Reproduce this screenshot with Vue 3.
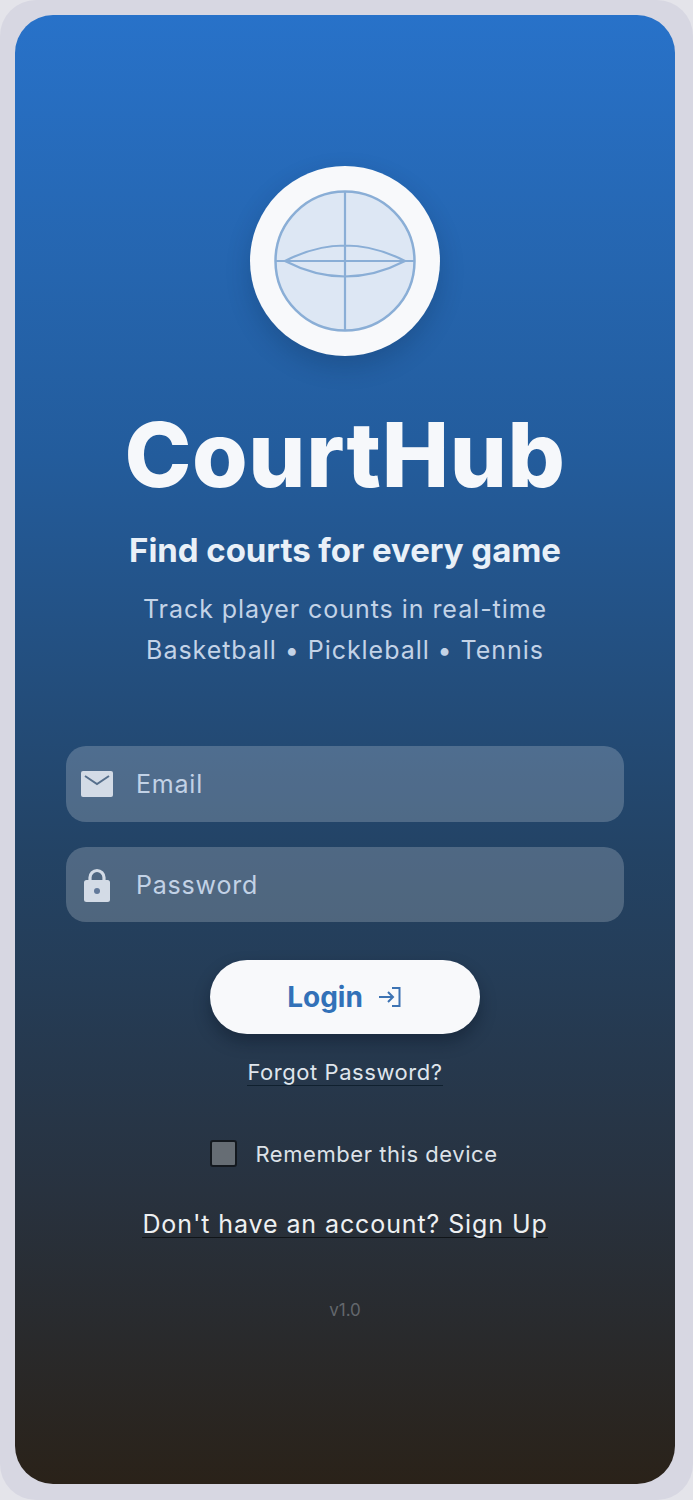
<script setup>
</script>

<template>
  <div class="frame">
    <main class="screen">
      <div class="logo">
        <svg width="144" height="144" viewBox="0 0 144 144" fill="none">
          <circle cx="72" cy="72" r="69.5" fill="#dde7f4" stroke="#8aaed6" stroke-width="2.5" />
          <path d="M72 2.5V141.5M2.5 72H141.5M12 72Q72 41 132 72Q72 103 12 72Z" stroke="#8aaed6" stroke-width="2.2" />
        </svg>
      </div>
      <h1 class="title">CourtHub</h1>
      <h2 class="tagline">Find courts for every game</h2>
      <p class="sub">Track player counts in real-time<br />Basketball • Pickleball • Tennis</p>

      <form class="form" @submit.prevent>
        <label class="field">
          <svg class="icon" width="34" height="28" viewBox="0 0 34 28">
            <rect x="1" y="1" width="32" height="26" rx="2" fill="#d3dbe6" />
            <path d="M5 6L17 14L29 6" fill="none" stroke="#566f8c" stroke-width="2" />
          </svg>
          <span class="placeholder">Email</span>
        </label>
        <label class="field field-second">
          <svg class="icon" width="34" height="36" viewBox="0 0 34 36">
            <path d="M10 16V10.5a7 7 0 0 1 14 0V16" fill="none" stroke="#d3dbe6" stroke-width="3.2" />
            <rect x="4" y="13" width="26" height="22" rx="2.5" fill="#d3dbe6" />
            <circle cx="17" cy="24" r="3" fill="#62799a" />
          </svg>
          <span class="placeholder">Password</span>
        </label>

        <button class="login" type="button">
          <span>Login</span>
          <svg width="26" height="24" viewBox="0 0 26 24" fill="none" stroke="#3d73b3" stroke-width="2">
            <path d="M15 3H22.5V21H15" />
            <path d="M2 12H16M11 7L16 12L11 17" />
          </svg>
        </button>
      </form>

      <a class="forgot">Forgot Password?</a>
      <label class="remember">
        <span class="box"></span>
        <span>Remember this device</span>
      </label>
      <a class="signup">Don't have an account? Sign Up</a>
      <div class="version">v1.0</div>
    </main>
  </div>
</template>

<style>
html, body { margin: 0; background: #e4e4ea; }
</style>

<style scoped>
.frame {
  width: 693px;
  height: 1500px;
  box-sizing: border-box;
  padding: 15px 18px 16px 15px;
  background: #d7d7e2;
  border-radius: 36px;
  font-family: Inter, "Noto Sans", sans-serif;
}
.screen {
  height: 100%;
  box-sizing: border-box;
  padding-top: 151px;
  display: flex;
  flex-direction: column;
  align-items: center;
  border-radius: 38px;
  background: linear-gradient(180deg, #2872c9 0%, #235c9c 30%, #234365 57%, #28323f 80%, #2a2219 100%);
  color: #fff;
}
.logo {
  width: 190px;
  height: 190px;
  flex: none;
  display: flex;
  align-items: center;
  justify-content: center;
  border-radius: 50%;
  background: #f8f9fb;
  box-shadow: 0 10px 24px rgba(10, 30, 60, 0.22);
}
.title {
  margin: 44px 0 0;
  font-size: 90px;
  line-height: 110px;
  font-weight: 800;
  letter-spacing: 0.6px;
  color: #f6f8fb;
}
.tagline {
  margin: 19px 0 0;
  font-size: 33px;
  line-height: 42px;
  font-weight: 700;
  letter-spacing: -0.05px;
  color: #e9f0f8;
}
.sub {
  margin: 18px 0 0;
  font-size: 25px;
  line-height: 41px;
  letter-spacing: 0.95px;
  text-align: center;
  color: #c3d3e7;
}
.form {
  width: 558px;
  margin-top: 75px;
  display: flex;
  flex-direction: column;
  align-items: center;
}
.field {
  width: 100%;
  height: 76px;
  display: flex;
  align-items: center;
  box-sizing: border-box;
  border-radius: 20px;
  background: rgba(255, 255, 255, 0.2);
}
.field-second { margin-top: 25px; height: 75px; }
.icon { flex: none; margin-left: 14px; }
.placeholder {
  margin-left: 22px;
  font-size: 25px;
  letter-spacing: 0.8px;
  color: #c2d2e6;
}
.login {
  width: 270px;
  height: 74px;
  margin-top: 38px;
  display: flex;
  align-items: center;
  justify-content: center;
  gap: 14px;
  border: 0;
  border-radius: 37px;
  background: #f8f9fb;
  box-shadow: 0 8px 16px rgba(5, 15, 30, 0.35);
  font-family: inherit;
  font-size: 28px;
  font-weight: 700;
  color: #3271b8;
}
.forgot {
  margin-top: 25px;
  font-size: 22px;
  line-height: 26px;
  letter-spacing: 0.55px;
  color: #dfe5ec;
  border-bottom: 1px solid #10202f;
}
.remember {
  margin-top: 54px;
  margin-left: 18px;
  display: flex;
  align-items: center;
  gap: 18px;
  font-size: 22px;
  letter-spacing: 0.55px;
  color: #dde2e8;
}
.box {
  width: 23px;
  height: 23px;
  border: 2px solid #14191f;
  border-radius: 3px;
  background: #666d74;
}
.signup {
  margin-top: 44px;
  font-size: 25px;
  line-height: 26px;
  letter-spacing: 0.9px;
  color: #eef0f2;
  border-bottom: 1px solid #101418;
}
.version {
  margin-top: 62px;
  font-size: 17px;
  color: #63676c;
}
</style>
